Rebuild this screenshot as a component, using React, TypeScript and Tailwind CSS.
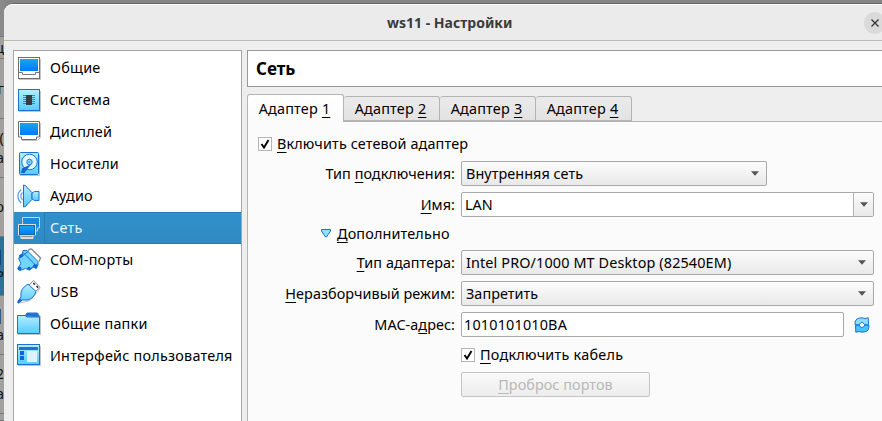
import React from "react";

type P = { children?: React.ReactNode; className?: string };

const U = ({ children }: P) => (
  <span className="underline decoration-1 underline-offset-[3px]">{children}</span>
);

const Svg = ({ children }: P) => (
  <svg viewBox="0 0 24 24" className="h-6 w-6 shrink-0 overflow-visible">
    <defs>
      <linearGradient id="screen" x1="0" y1="0" x2="0" y2="1">
        <stop offset="0" stopColor="#1ba5e8" />
        <stop offset="1" stopColor="#007aff" />
      </linearGradient>
      <linearGradient id="sky" x1="0" y1="0" x2="0" y2="1">
        <stop offset="0" stopColor="#b5edff" />
        <stop offset="1" stopColor="#55ccff" />
      </linearGradient>
    </defs>
    {children}
  </svg>
);

const Monitor = () => (
  <Svg>
    <path d="M2 23.500h21.500V3" fill="none" stroke="#c4c4c4" />
    <rect x="1.500" y="1.500" width="21" height="21" fill="#fff" stroke="#6e6e6e" />
    <rect x="3" y="3" width="18" height="12" fill="url(#screen)" />
    <path d="M1.500 16.500h4v2h13v-2h4" fill="none" stroke="#777" />
  </Svg>
);

const Display = () => (
  <Svg>
    <path d="M5 20.500h15.500l3-3V3" fill="none" stroke="#c4c4c4" />
    <path d="M1.500 1.500h21v15.500h-3v2.500h-15V17h-3z" fill="#fff" stroke="#6e6e6e" />
    <rect x="3" y="3" width="18" height="12" fill="url(#screen)" />
  </Svg>
);

const Chip = () => (
  <Svg>
    <path d="M2 23.500h21.500V3" fill="none" stroke="#c4c4c4" />
    <rect x="1.500" y="1.500" width="21" height="21" fill="url(#sky)" stroke="#1b70d0" />
    <path d="M6 7.500h12M6 9.500h12M6 11.500h12M6 13.500h12M6 15.500h12" stroke="#4d83a3" />
    <rect x="9" y="7" width="6" height="10" fill="#373b43" />
  </Svg>
);

const Disk = () => (
  <Svg>
    <path d="M3 23.500h19.500V3" fill="none" stroke="#c4c4c4" />
    <rect x="2.500" y=".5" width="19" height="22" rx="1" fill="url(#sky)" stroke="#1b70d0" />
    <circle cx="12.500" cy="10" r="7.800" fill="#e0f8ff" stroke="#1b70d0" />
    <circle cx="12.500" cy="10" r="2.700" fill="#9be4ff" stroke="#1b70d0" />
    <circle cx="12.500" cy="10" r=".8" fill="#1268d0" />
    <path d="M14.500 12L10 17.500 7.500 21H4l1-4.500z" fill="#1268d0" />
  </Svg>
);

const Speaker = () => (
  <Svg>
    <path d="M4 5.500Q-2.500 12 4 19M5.500 8.500Q2 12 5.500 16" fill="none" stroke="#5b9be0" strokeWidth="1.200" />
    <path d="M6.500 1q2.500 0 4 3l4.500 4.500v7L10.500 20q-1.500 3-4 3z" fill="url(#sky)" stroke="#1b70d0" />
    <path d="M15 9l2.500-1.500h4.500v9h-4.500L15 15z" fill="url(#sky)" stroke="#1b70d0" />
  </Svg>
);

const Net = () => (
  <Svg>
    <path d="M5.500 1.500h17V12h-2v3H8v-3H5.500z" fill="#148ae0" stroke="#cfd6d9" />
    <path d="M1.500 8.500h17V19h-2.500v3.500H4V19H1.500z" fill="#d5d5d2" stroke="#e0e0dc" />
    <rect x="2.500" y="9.500" width="15" height="9" fill="url(#screen)" stroke="#16689e" />
    <path d="M4.500 20.500h11" stroke="#8a969c" />
  </Svg>
);

const Com = () => (
  <Svg>
    <path d="M11 3q2-3 4-1.500L23.500 10l-1.500 3.500" fill="#fff" stroke="#888" strokeWidth="1.400" />
    <path d="M6 2.500h4L21 13.500v4l-3 .5-5.500 4-4-1.500L3 22.500.8 20.500l3-5L1.500 10 5 7z" fill="#70d5ff" stroke="#1b70d0" />
    <path d="M6 4.500L18.500 17M2.500 10L11 3.500M12 21.500l8.500-5.500" stroke="#1b70d0" fill="none" />
    <path d="M2.500 9L6 6.500M16.500 17l3.500 3" stroke="#1268d0" strokeWidth="3" />
    <circle cx="2.500" cy="20.500" r="2" fill="#1268d0" />
    <circle cx="12" cy="20.500" r="1.700" fill="#1268d0" />
  </Svg>
);

const Usb = () => (
  <Svg>
    <path d="M3 23L13 20.500l7-8 3-4" fill="none" stroke="#c4c4c4" />
    <path d="M12 5l4.500-4.500 6.500 7-4.500 4z" fill="#fff" stroke="#888" />
    <path d="M16.300 3l1.600 1.600M19.500 6l1.600 1.600" stroke="#333" strokeWidth="1.600" />
    <path d="M11 4l8 7.500q-2 6.500-8 8.500H5.500L1.500 22.500 1 21l3-4q-1.500-8 7-13z" fill="url(#sky)" stroke="#1b70d0" />
    <path d="M.8 22.800l3.500-3.500" stroke="#1268d0" strokeWidth="2.500" />
  </Svg>
);

const Folder = () => (
  <Svg>
    <path d="M1 22.500h22.500V4" fill="none" stroke="#c4c4c4" />
    <path d="M8 4l2-3h10.500l2 3.500z" fill="#2470d8" stroke="#2470d8" />
    <path d="M.5 3.500h7.500l2 1.500h12.500v16.500H.5z" fill="url(#sky)" stroke="#1b70d0" />
  </Svg>
);

const Iface = () => (
  <Svg>
    <path d="M1 21.500h22.500V2" fill="none" stroke="#c4c4c4" />
    <rect x=".5" y=".5" width="22" height="20" fill="url(#sky)" stroke="#1b70d0" />
    <rect x="2" y="3" width="19" height="3" fill="#2470d8" />
    <rect x="3" y="7" width="4" height="4" fill="#1268d0" />
    <rect x="3" y="12" width="4" height="4" fill="#1268d0" />
    <rect x="10" y="7" width="10" height="11" fill="#daf5ff" />
  </Svg>
);

const items: { icon: React.ReactNode; text: string; active?: boolean }[] = [
  { icon: <Monitor />, text: "Общие" },
  { icon: <Chip />, text: "Система" },
  { icon: <Display />, text: "Дисплей" },
  { icon: <Disk />, text: "Носители" },
  { icon: <Speaker />, text: "Аудио" },
  { icon: <Net />, text: "Сеть", active: true },
  { icon: <Com />, text: "COM-порты" },
  { icon: <Usb />, text: "USB" },
  { icon: <Folder />, text: "Общие папки" },
  { icon: <Iface />, text: "Интерфейс пользователя" },
];

const Arrow = () => (
  <svg viewBox="0 0 8 5" className="h-[5px] w-2 shrink-0">
    <path d="M0 .3h8L4 4.700z" fill="#555" />
  </svg>
);

const Check = () => (
  <span className="flex h-3.5 w-3.5 shrink-0 items-center justify-center border border-[#b5b5b5] bg-white">
    <svg viewBox="0 0 10 10" className="h-2.5 w-2.5">
      <path d="M1.500 5l2.500 3.500L8.500 1" fill="none" stroke="#000" strokeWidth="1.900" />
    </svg>
  </span>
);

const Row = ({ label, children, className = "" }: P & { label?: React.ReactNode }) => (
  <div className={`flex h-[25px] items-center ${className}`}>
    <div className="w-[207px] shrink-0 pr-[6px] text-right">{label}</div>
    {children}
  </div>
);

const Combo = ({ children, className = "" }: P) => (
  <div
    className={`flex h-[25px] items-center justify-between rounded-[2px] border border-[#a9a9a9] bg-gradient-to-b from-[#fcfcfc] to-[#e9e9e9] pl-1 pr-[7px] ${className}`}
  >
    <span>{children}</span>
    <Arrow />
  </div>
);

const Tab = ({ n }: { n: number }) => (
  <div className="mt-0.5 flex h-[25px] w-24 items-center justify-center rounded-t-[3px] border border-l-0 border-[#b4b4b4] bg-gradient-to-b from-[#ebebeb] to-[#e2e2e2] pr-0.5 pt-px tracking-[0.2px]">
    <span>Адаптер <U>{n}</U></span>
  </div>
);

const behind = [
  { h: "h-[37px]", c: "bg-[#8a8a8a]", text: "" },
  { h: "h-[22px]", c: "bg-[#a3a19f]", text: "ц" },
  { h: "h-[60px]", c: "bg-[#a3a19f]", text: "г" },
  { h: "h-[59px]", c: "bg-[#a3a19f]", text: "( а" },
  { h: "h-[59px]", c: "bg-[#a3a19f]", text: "о" },
  { h: "h-[59px]", c: "bg-[#2b7199]", text: "| Р" },
  { h: "h-[59px]", c: "bg-[#a3a19f]", text: "| а" },
  { h: "h-[59px]", c: "bg-[#a3a19f]", text: "2 а" },
  { h: "h-[7px]", c: "bg-[#a3a19f]", text: "" },
];

export default function App() {
  return (
    <div className="relative flex h-[421px] w-[882px] overflow-hidden whitespace-nowrap bg-[#8b8b8b] bg-gradient-to-b from-[#858585] to-[#8f8f8f] font-['Noto_Sans','Open_Sans',sans-serif] text-[14.4px] leading-5 tracking-[0.06px] text-black">
      <div className="w-1 shrink-0 overflow-hidden">
        {behind.map((b, i) => (
          <div key={i} className={`flex flex-col items-end justify-center overflow-hidden border-b border-[#777] text-[#111] ${b.h} ${b.c}`}>
            {b.text.split(" ").map((s, k) => (
              <span key={k}>{s}</span>
            ))}
          </div>
        ))}
      </div>
      <div className="mt-[3px] flex min-w-0 flex-1 flex-col rounded-tl-[9px] border-t border-[#666] bg-[#eee]">
        <header className="flex h-[37px] shrink-0 items-center rounded-tl-[9px] border-b border-t border-b-[#b9b9b9] border-t-white bg-[#ebebeb]">
          <h1 className="ml-[383px] w-[126px] text-[14px] font-bold tracking-normal text-[#3b3b3b]">ws11 - Настройки</h1>
          <span className="ml-[352px] flex h-[22px] w-[22px] shrink-0 items-center justify-center rounded-full bg-[#dadada]">
            <svg viewBox="0 0 8 8" className="h-2 w-2">
              <path d="M.5.5l7 7M7.500.5l-7 7" stroke="#333" strokeWidth="1.300" />
            </svg>
          </span>
        </header>
        <div className="flex min-h-0 flex-1 pl-[9px] pt-[9px]">
          <nav className="w-[229px] shrink-0 border border-b-0 border-[#a5a5a5] bg-white">
            {items.map((i) => (
              <div
                key={i.text}
                className={`flex h-8 items-center pl-[3px] first:mt-px ${i.active ? "bg-gradient-to-b from-[#3090cb] to-[#308ac2] text-[#eaf5fc]" : ""}`}
              >
                {i.icon}
                <span
                  className={`ml-[3px] flex h-full flex-1 items-center pl-[5px] tracking-[0.23px] ${i.active ? "border border-r-0 border-[#2a7db0]" : "border border-transparent"}`}
                >
                  {i.text}
                </span>
              </div>
            ))}
          </nav>
          <main className="ml-[5px] flex min-w-0 flex-1 flex-col">
            <div className="flex h-[37px] shrink-0 items-center border border-r-0 border-[#999] bg-white pl-2 text-[17px] font-bold tracking-normal">
              Сеть
            </div>
            <div className="relative z-10 mt-[7px] flex h-[27px] shrink-0">
              <div className="flex h-7 w-[97px] items-center justify-center rounded-t-[3px] border border-b-0 border-[#b4b4b4] bg-gradient-to-b from-white to-[#fbfbfb] pr-0.5 tracking-[0.2px]">
                <span>Адаптер <U>1</U></span>
              </div>
              <Tab n={2} />
              <Tab n={3} />
              <Tab n={4} />
            </div>
            <section className="min-h-0 flex-1 border-l border-t border-[#b4b4b4] bg-[#fbfbfb] pl-1.5 pt-[9px]">
              <div className="flex h-[25px] items-center pl-1">
                <Check />
                <span className="ml-[5px] tracking-[0.14px]"><U>В</U>ключить сетевой адаптер</span>
              </div>
              <Row className="mt-[5px]" label={<>Тип <U>п</U>одключения:</>}>
                <Combo className="w-[306px]">Внутренняя сеть</Combo>
              </Row>
              <Row className="mt-1.5" label={<><U>И</U>мя:</>}>
                <div className="flex h-[25px] w-[413px] overflow-hidden rounded-[2px] border border-[#a9a9a9] bg-white">
                  <span className="flex-1 pl-[3px] leading-6">LAN</span>
                  <span className="flex w-5 items-center justify-center border-l border-[#b4b4b4] bg-gradient-to-b from-[#fcfcfc] to-[#e9e9e9]">
                    <Arrow />
                  </span>
                </div>
              </Row>
              <div className="mt-1.5 flex h-[21px] items-center pl-[67px]">
                <svg viewBox="0 0 10 9" className="h-[9px] w-2.5">
                  <path d="M.5.5h9v1.500L5.500 8h-1L.5 2z" fill="#8fe0ff" stroke="#1b70d0" />
                </svg>
                <span className="ml-1.5 tracking-[0.15px]"><U>Д</U>ополнительно</span>
              </div>
              <Row className="mt-1.5" label={<><U>Т</U>ип адаптера:</>}>
                <Combo className="w-[413px] tracking-[0.13px]">Intel PRO/1000 MT Desktop (82540EM)</Combo>
              </Row>
              <Row className="mt-1.5" label={<><U>Н</U>еразборчивый режим:</>}>
                <Combo className="w-[413px]">Запретить</Combo>
              </Row>
              <Row className="mt-1.5" label={<>MAC-а<U>д</U>рес:</>}>
                <div className="h-[25px] w-[383px] rounded-[2px] border border-[#a9a9a9] bg-white pl-[2px] leading-6 tracking-[0.18px]">1010101010BA</div>
                <svg viewBox="0 0 16 16" className="ml-[10px] h-4 w-4">
                  <path d="M1 7.500Q.8 2 5 1.200q3-1 6 .3l3.200-.7.300 6.700-3.500.5-1-1.500Q8 4.500 6.500 6L5 8z" fill="#8be0ff" stroke="#1b70d0" strokeLinejoin="round" />
                  <path d="M15 8.500q.2 5.500-4 6.300-3 1-6-.3l-3.200.7-.3-6.700L5 8l1 1.500q2 2 3.500.5L11 8z" fill="#45c4ff" stroke="#1b70d0" strokeLinejoin="round" />
                </svg>
              </Row>
              <Row className="mt-[5px]">
                <Check />
                <span className="ml-[5px] tracking-[0.25px]"><U>П</U>одключить кабель</span>
              </Row>
              <Row className="mt-[5px]">
                <div className="flex h-[25px] w-[189px] items-center justify-center rounded-[2px] border border-[#c5c5c5] bg-gradient-to-b from-[#f9f9f9] to-[#ededed] text-[#b8b8b8]">
                  <span><U>П</U>роброс портов</span>
                </div>
              </Row>
            </section>
          </main>
        </div>
      </div>
    </div>
  );
}
